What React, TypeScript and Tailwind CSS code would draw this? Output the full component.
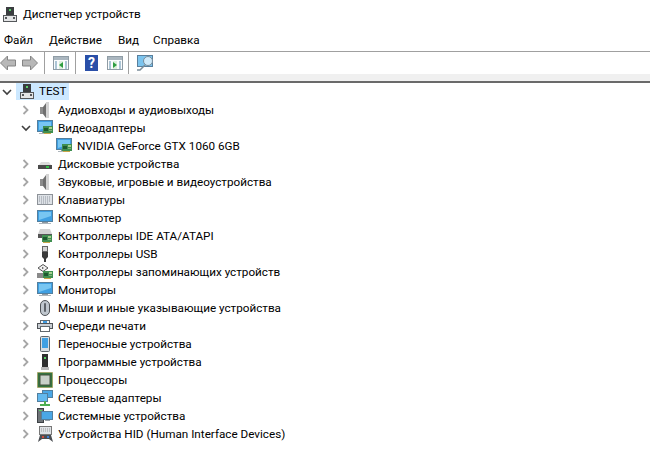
import type { ReactNode } from 'react';

const Monitor = () => (
  <>
    <rect x="0.5" y="0.5" width="15" height="11" fill="#3f9fe2" stroke="#527f9e" />
    <path d="M2 2 H14 V6 L2 10 Z" fill="#78c6f2" />
    <rect x="5" y="12" width="6" height="1" fill="#8f9aa3" />
    <rect x="2" y="13" width="12" height="1" fill="#aeb6bc" />
  </>
);
const Card = ({ x = 6, y = 6 }: { x?: number; y?: number }) => (
  <>
    <rect x={x} y={y} width="10" height="7" fill="#3f8f50" />
    <rect x={x + 1} y={y + 2} width="4" height="3" fill="#1e5a30" />
    <rect x={x + 6} y={y + 1} width="3" height="2" fill="#a6cf90" />
    <rect x={x + 6} y={y + 4} width="3" height="1" fill="#7fb37a" />
    <rect x={x + 1} y={y + 7} width="7" height="1" fill="#c7a64a" />
  </>
);

const Speaker = () => (
  <svg width="16" height="16" viewBox="0 0 16 16">
    <rect x="3" y="5" width="3" height="7" fill="#8c8c8c" />
    <path d="M6 5 L9 1 V16 L6 12 Z" fill="#6f6f6f" />
    <path d="M9 0 H12 V16 H9 Z" fill="#d4d4d4" />
  </svg>
);

const icons: Record<string, ReactNode> = {
  speaker: <Speaker />,
  video: (
    <svg width="16" height="16" viewBox="0 0 16 16">
      <Monitor />
      <Card x={6} y={6} />
    </svg>
  ),
  disk: (
    <svg width="16" height="16" viewBox="0 0 16 16">
      <path d="M2 9 L4 6 H12 L14 9 Z" fill="#dcdcdc" />
      <rect x="1" y="9" width="14" height="4" fill="#4a4a4a" />
      <rect x="9" y="10" width="3" height="2" fill="#35c04a" />
    </svg>
  ),
  keyboard: (
    <svg width="16" height="16" viewBox="0 0 16 16">
      <rect x="0.5" y="2.5" width="15" height="10" fill="#dde1e6" stroke="#8d9298" />
      <path d="M2 5 H14 M2 7 H14 M2 9 H14 M4 11 H12" stroke="#8f96a0" strokeDasharray="1 1" />
    </svg>
  ),
  computer: (
    <svg width="16" height="16" viewBox="0 0 16 16">
      <Monitor />
    </svg>
  ),
  ide: (
    <svg width="16" height="16" viewBox="0 0 16 16">
      <path d="M1 6 L3 1 H13 L15 6 Z" fill="#d2d2d2" />
      <rect x="1" y="6" width="14" height="4" fill="#555" />
      <Card x={5} y={7} />
    </svg>
  ),
  usb: (
    <svg width="16" height="16" viewBox="0 0 16 16">
      <rect x="5.5" y="0.5" width="5" height="5" fill="#d4d4d4" stroke="#666" />
      <path d="M5 6 H11 V11 L9 13 V16 H7 V13 L5 11 Z" fill="#3a3a3a" />
    </svg>
  ),
  storage: (
    <svg width="16" height="16" viewBox="0 0 16 16">
      <path d="M6 0.5 L11 4 L6 7.5 L1 4 Z" fill="#f2f2f2" stroke="#555" />
      <path d="M5 3 L7 4 L5 5 Z" fill="#444" />
      <rect x="0" y="9" width="6" height="5" fill="#8a8a8a" />
      <Card x={6} y={7} />
    </svg>
  ),
  mouse: (
    <svg width="16" height="16" viewBox="0 0 16 16">
      <rect x="3.5" y="0.5" width="9" height="15" rx="4.5" fill="#bfc6cd" stroke="#4f5357" />
      <rect x="7" y="3" width="2" height="9" rx="1" fill="#5d6268" />
    </svg>
  ),
  printer: (
    <svg width="16" height="16" viewBox="0 0 16 16">
      <rect x="3.5" y="2.5" width="9" height="3" fill="#eef3f7" stroke="#60676d" />
      <rect x="6" y="3" width="4" height="2" fill="#3f9be0" />
      <rect x="0.5" y="5.5" width="15" height="5" fill="#c8cdd2" stroke="#4f5357" />
      <rect x="3.5" y="8.5" width="9" height="5" fill="#fff" stroke="#60676d" />
    </svg>
  ),
  portable: (
    <svg width="16" height="16" viewBox="0 0 16 16">
      <rect x="3.5" y="0.5" width="9" height="15" rx="1" fill="#d8dde1" stroke="#5f666c" />
      <rect x="5" y="2" width="6" height="10" fill="#3f9fe2" />
    </svg>
  ),
  software: (
    <svg width="16" height="16" viewBox="0 0 16 16">
      <rect x="5" y="0" width="6" height="13" fill="#2f2f2f" />
      <rect x="7" y="3" width="2" height="2" fill="#58d068" />
      <rect x="4" y="13" width="8" height="3" fill="#b9b9b9" />
    </svg>
  ),
  cpu: (
    <svg width="16" height="16" viewBox="0 0 16 16">
      <rect x="0.5" y="0.5" width="15" height="15" fill="#35733f" stroke="#a9953e" strokeDasharray="1 1" />
      <rect x="3" y="3" width="10" height="10" fill="#c9d0c9" stroke="#44513f" />
    </svg>
  ),
  network: (
    <svg width="16" height="16" viewBox="0 0 16 16">
      <rect x="5.5" y="0.5" width="10" height="7" fill="#4aa7e6" stroke="#527f9e" />
      <rect x="0.5" y="3.5" width="10" height="8" fill="#63b9ee" stroke="#527f9e" />
      <path d="M8 11 V14" stroke="#4caf50" strokeWidth="2" />
      <path d="M3 15 H13" stroke="#4caf50" strokeWidth="2" />
    </svg>
  ),
  system: (
    <svg width="16" height="16" viewBox="0 0 16 16">
      <rect x="0.5" y="0.5" width="6" height="14" fill="#6f7478" stroke="#3d4145" />
      <rect x="2" y="2" width="3" height="1" fill="#58d068" />
      <rect x="4.5" y="3.5" width="11" height="8" fill="#4aa7e6" stroke="#527f9e" />
      <rect x="8" y="12" width="5" height="1" fill="#9aa3aa" />
    </svg>
  ),
  hid: (
    <svg width="17" height="17" viewBox="0 0 17 17">
      <rect x="2.5" y="0.5" width="12" height="8" fill="#dfe2e6" stroke="#777" />
      <path d="M4 3 H13 M4 5 H13" stroke="#999" strokeDasharray="1 1" />
      <path d="M1 16 L3 9 H14 L16 16 L12 13 H5 Z" fill="#4a4d52" />
      <rect x="5" y="10" width="2" height="2" fill="#d04a3d" />
      <rect x="10" y="10" width="2" height="2" fill="#3f7fd0" />
    </svg>
  ),
};

const HostIcon = () => (
  <svg width="16" height="16" viewBox="0 0 16 16">
    <rect x="4" y="0" width="8" height="8" fill="#3a3d40" />
    <rect x="7" y="2" width="2" height="2" fill="#58d068" />
    <rect x="1.5" y="8.5" width="13" height="6" fill="#e4e5e6" stroke="#55585b" />
    <rect x="3" y="10" width="2" height="2" fill="#55585b" />
    <rect x="11" y="10" width="2" height="2" fill="#55585b" />
  </svg>
);

const Closed = () => (
  <svg width="10" height="10" viewBox="0 0 10 10">
    <path d="M2.5 1 L6.5 5 L2.5 9" fill="none" stroke="#a6a6a6" strokeWidth="1.8" />
  </svg>
);
const Open = () => (
  <svg width="10" height="10" viewBox="0 0 10 10">
    <path d="M1 3 L5 7 L9 3" fill="none" stroke="#404040" strokeWidth="1.6" />
  </svg>
);

const WindowIcon = ({ arrow }: { arrow: string }) => (
  <svg width="16" height="14" viewBox="0 0 16 14">
    <rect x="0.5" y="0.5" width="15" height="13" fill="#fbfcfd" stroke="#8f9ca5" />
    <rect x="1" y="1" width="14" height="3" fill="#aab6bf" />
    <path d="M2 6 H4 M2 8 H4 M2 10 H4 M2 12 H4 M12 6 H14 M12 8 H14 M12 10 H14 M12 12 H14" stroke="#5f8fae" />
    <path d="M6 5 H10 V13 H6 Z" fill="#dcefdc" />
    <path d={arrow} fill="#2f9e40" />
  </svg>
);

const rows = [
  { icon: 'speaker', label: 'Аудиовходы и аудиовыходы' },
  { icon: 'video', label: 'Видеоадаптеры', open: true },
  { icon: 'video', label: 'NVIDIA GeForce GTX 1060 6GB', child: true },
  { icon: 'disk', label: 'Дисковые устройства' },
  { icon: 'speaker', label: 'Звуковые, игровые и видеоустройства' },
  { icon: 'keyboard', label: 'Клавиатуры' },
  { icon: 'computer', label: 'Компьютер' },
  { icon: 'ide', label: 'Контроллеры IDE ATA/ATAPI' },
  { icon: 'usb', label: 'Контроллеры USB' },
  { icon: 'storage', label: 'Контроллеры запоминающих устройств' },
  { icon: 'computer', label: 'Мониторы' },
  { icon: 'mouse', label: 'Мыши и иные указывающие устройства' },
  { icon: 'printer', label: 'Очереди печати' },
  { icon: 'portable', label: 'Переносные устройства' },
  { icon: 'software', label: 'Программные устройства' },
  { icon: 'cpu', label: 'Процессоры' },
  { icon: 'network', label: 'Сетевые адаптеры' },
  { icon: 'system', label: 'Системные устройства' },
  { icon: 'hid', label: 'Устройства HID (Human Interface Devices)' },
];

const Sep = () => <div className="w-px h-[22px] bg-[#a0a0a0]" />;

export default function App() {
  return (
    <div className="w-[650px] h-[463px] bg-white overflow-hidden text-[11.7px] text-black font-['Roboto',sans-serif]">
      {/* Title */}
      <div className="h-[29px] flex items-center pl-[2px] gap-[5px]">
        <HostIcon />
        <span className="pt-px">Диспетчер устройств</span>
      </div>
      {/* Menu */}
      <div className="h-[22px] flex items-center pl-[4px] gap-[16px] pt-px">
        <span>Файл</span>
        <span>Действие</span>
        <span>Вид</span>
        <span className="-ml-[2px]">Справка</span>
      </div>
      {/* Toolbar */}
      <div className="h-[23px] border-t border-[#a0a0a0] flex items-center">
        <svg width="38" height="16" viewBox="0 0 38 16" className="mr-[6px]">
          <path d="M0.5 8 L7.5 1 V5 H15.5 V11 H7.5 V15 Z" fill="#b8b8b8" stroke="#858585" />
          <path d="M37.5 8 L30.5 1 V5 H22.5 V11 H30.5 V15 Z" fill="#b8b8b8" stroke="#858585" />
        </svg>
        <Sep />
        <div className="w-[8px]" />
        <WindowIcon arrow="M10 6 L6 9 L10 12 Z" />
        <div className="w-[6px]" />
        <Sep />
        <div className="w-[9px]" />
        <svg width="13" height="16" viewBox="0 0 13 16">
          <rect width="13" height="16" fill="#2a4fa8" />
          <text x="6.5" y="13" textAnchor="middle" fontSize="14" fontWeight="700" fill="#fff">?</text>
        </svg>
        <div className="w-[9px]" />
        <WindowIcon arrow="M6 6 L10 9 L6 12 Z" />
        <div className="w-[5px]" />
        <Sep />
        <div className="w-[8px]" />
        <svg width="17" height="16" viewBox="0 0 17 16">
          <rect x="0.5" y="0.5" width="15" height="11" fill="#7cc4ee" stroke="#5a7f9c" />
          <circle cx="11" cy="6" r="4.5" fill="#cfeafa" stroke="#7a8c99" />
          <path d="M8 10 L3 15 H0" stroke="#7a8c99" strokeWidth="1.5" fill="none" />
        </svg>
      </div>
      <div className="h-[7px] bg-[#f0f0f0]" />
      <div className="h-[2px] bg-[#6a6a6a]" />
      {/* Tree */}
      <div>
        <div className="h-[18px] flex items-start">
          <div className="w-[16px] h-[17px] flex items-center pl-[2px]">
            <Open />
          </div>
          <div className="flex items-center h-[17px] w-[53px] bg-[#cce8ff] pl-[3px] gap-[4px]">
            <HostIcon />
            <span className="pt-px">TEST</span>
          </div>
        </div>
        {rows.map((row) => (
          <div key={row.label} className="h-[18px] flex items-center whitespace-nowrap">
            <div className={row.child ? 'w-[56px]' : 'w-[21px]'} />
            {!row.child && (
              <div className="w-[16px] flex items-center">
                {row.open ? <Open /> : <Closed />}
              </div>
            )}
            <div className="w-[21px] flex items-center">{icons[row.icon]}</div>
            <span className="pt-px">{row.label}</span>
          </div>
        ))}
      </div>
    </div>
  );
}
